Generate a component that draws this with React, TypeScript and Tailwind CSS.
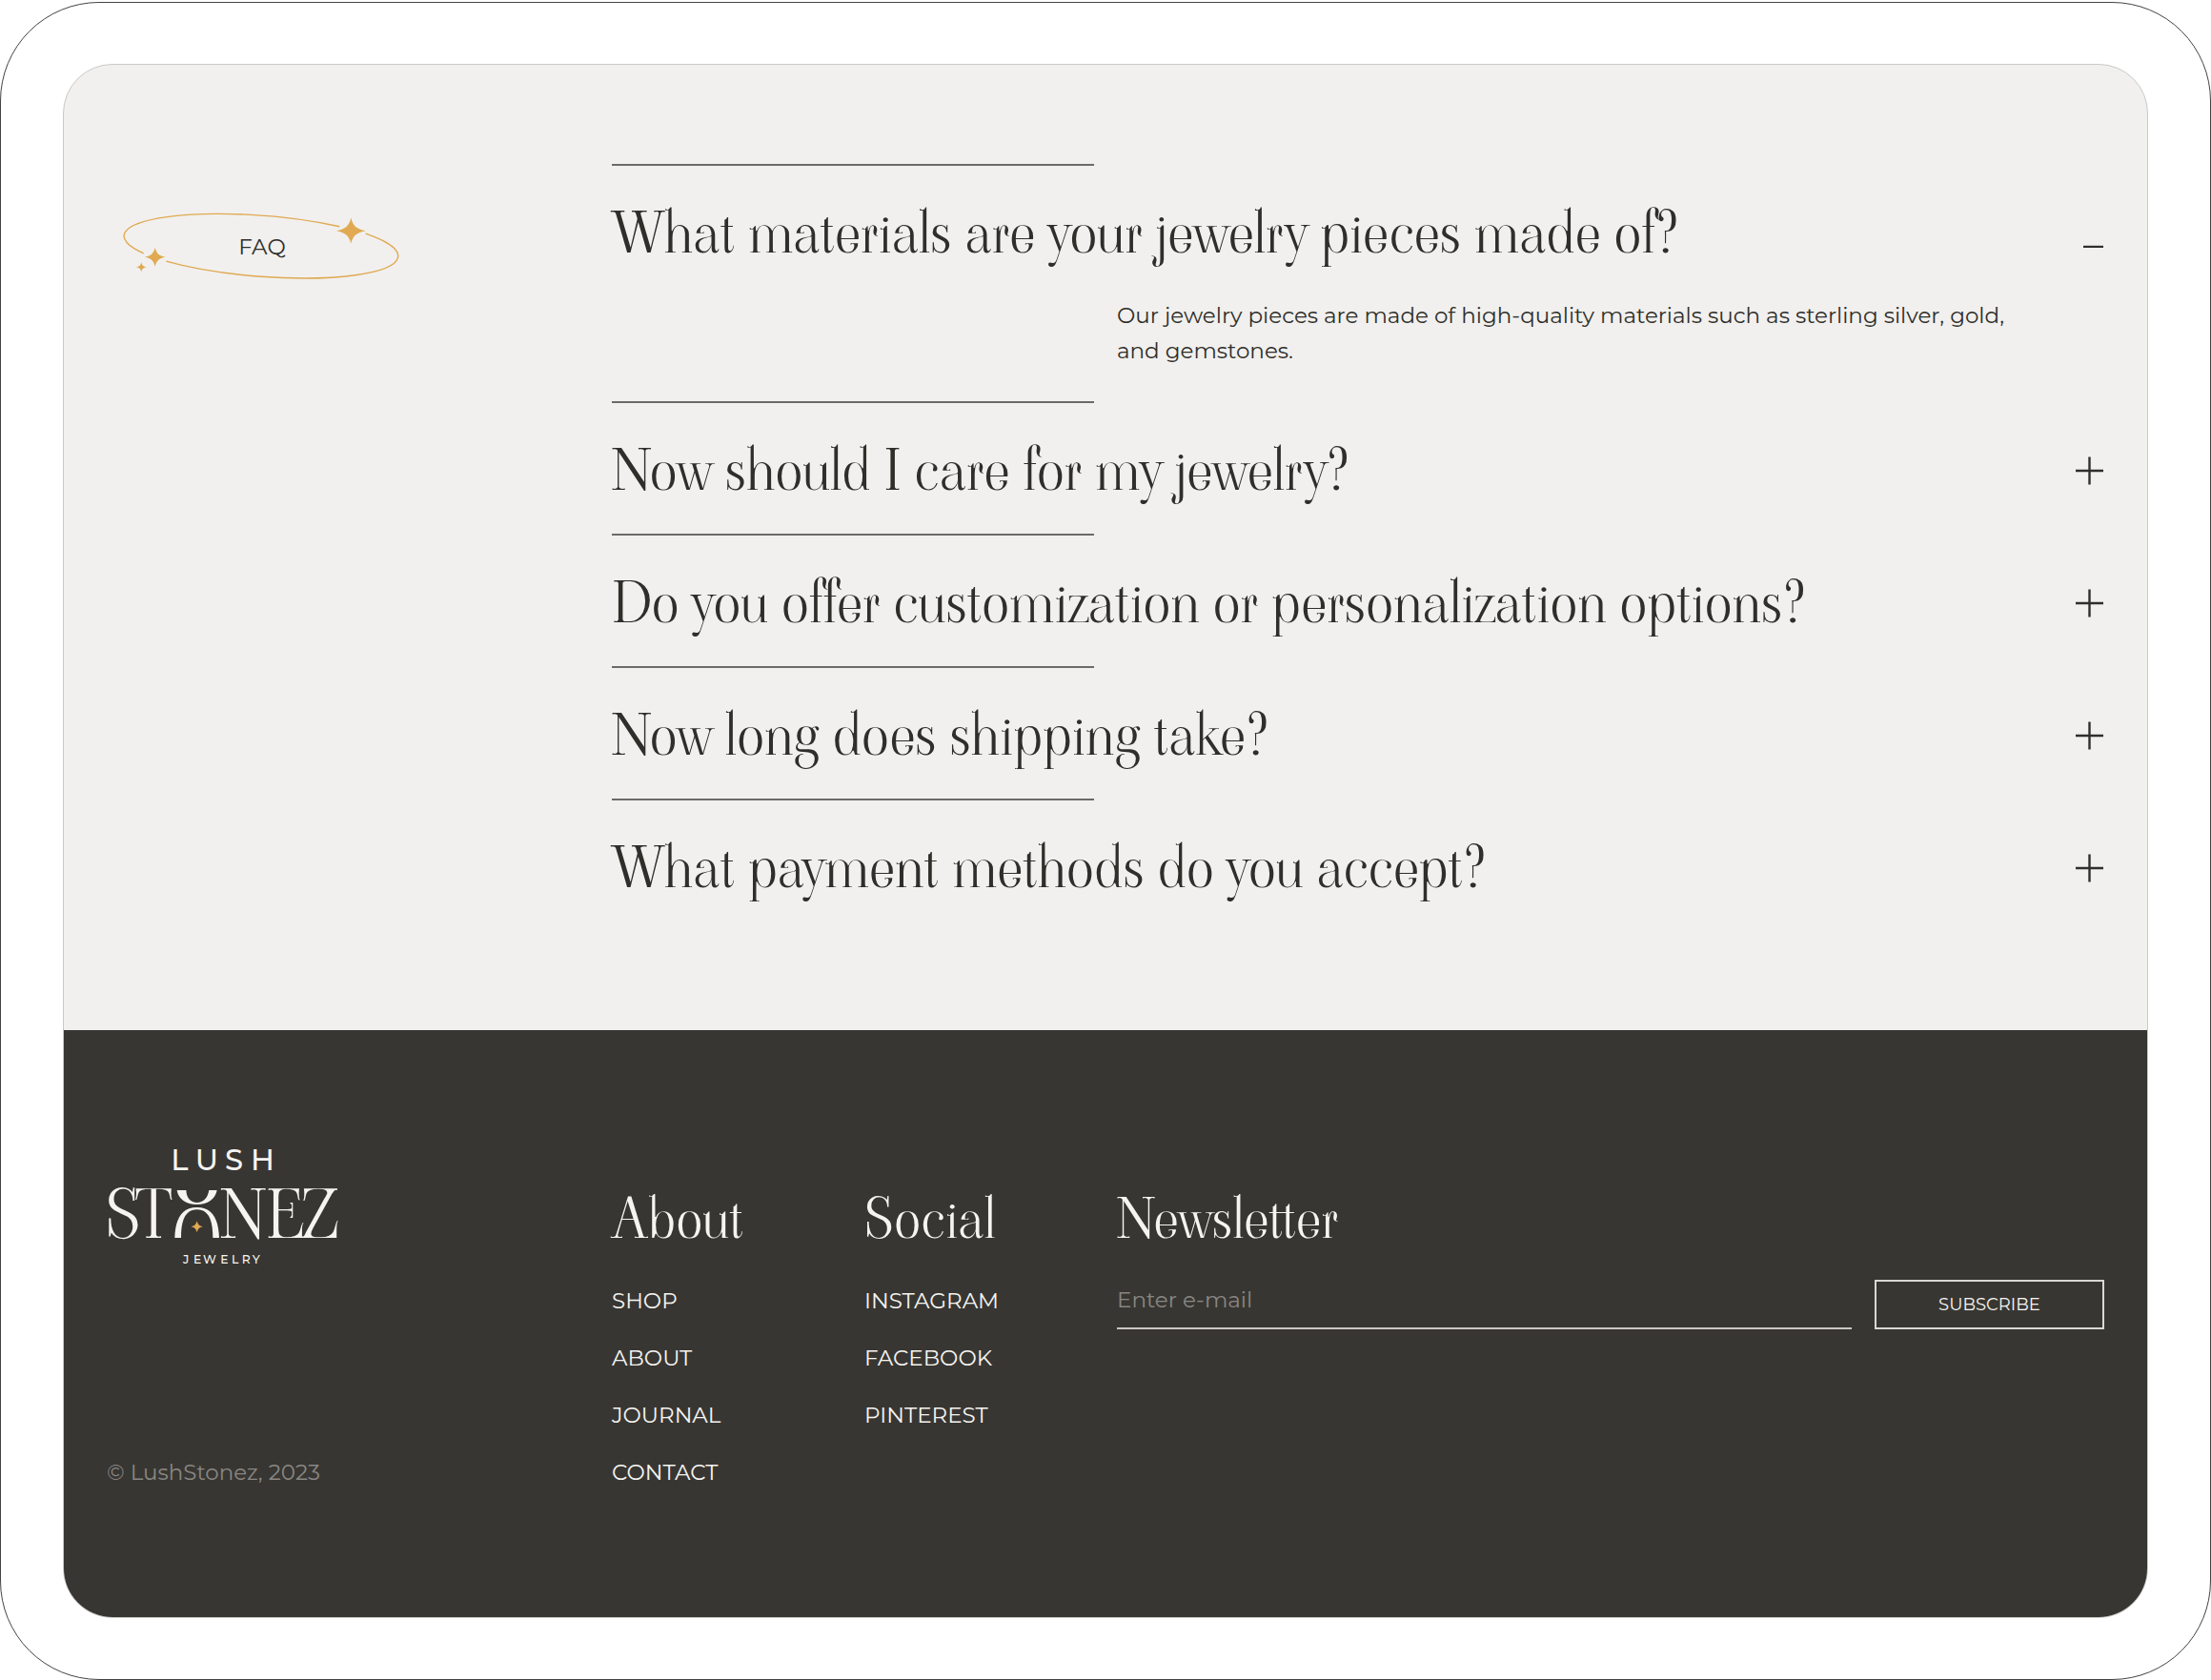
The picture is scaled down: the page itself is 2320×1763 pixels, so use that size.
import React, { useState } from "react";

type Faq = { question: string; answer: string };

const faqs: Faq[] = [
  {
    question: "What materials are your jewelry pieces made of?",
    answer:
      "Our jewelry pieces are made of high-quality materials such as sterling silver, gold, and gemstones.",
  },
  {
    question: "Now should I care for my jewelry?",
    answer: "",
  },
  {
    question: "Do you offer customization or personalization options?",
    answer: "",
  },
  {
    question: "Now long does shipping take?",
    answer: "",
  },
  {
    question: "What payment methods do you accept?",
    answer: "",
  },
];

const linkGroups = [
  { title: "About", links: ["SHOP", "ABOUT", "JOURNAL", "CONTACT"] },
  { title: "Social", links: ["INSTAGRAM", "FACEBOOK", "PINTEREST"] },
];

function FaqBadge() {
  return (
    <div className="ml-4 mt-12 grid w-[294px] place-items-center">
      <svg
        className="col-start-1 row-start-1"
        width="294"
        height="78"
        viewBox="0 0 294 78"
        fill="none"
        aria-hidden="true"
      >
        <g stroke="#e0a952" strokeWidth="1.4">
          <path d="M228.3 17.8A145.4 32.3 4.5 0 0 22.7 45.9" />
          <path d="M46.3 54.2A145.4 32.3 4.5 0 0 255.6 25.2" />
        </g>
        <g fill="#e0a952">
          <path d="M240.3 8.5C242.3 17 246 20.5 255.8 22.2C246 24 242.3 27.5 240.3 35.6C238.3 27.5 234.5 24 225 22.2C234.5 20.5 238.3 17 240.3 8.5Z" />
          <path d="M34.7 39.7C36.2 46 38.7 48.5 45.7 49.7C38.7 51 36.2 53.5 34.7 59.7C33.2 53.5 30.7 51 23.7 49.7C30.7 48.5 33.2 46 34.7 39.7Z" />
          <path d="M20.3 55.3C21 58.5 22.3 59.7 25.8 60.3C22.3 61 21 62.3 20.3 65.4C19.6 62.3 18.3 61 14.8 60.3C18.3 59.7 19.6 58.5 20.3 55.3Z" />
        </g>
      </svg>
      <h2 className="col-start-1 row-start-1 text-[23px] leading-[36px]">FAQ</h2>
    </div>
  );
}

function Logo() {
  return (
    <svg
      width="246"
      height="133"
      viewBox="66 50 738 399"
      fill="#f5f4f1"
      role="img"
      aria-label="Lush Stonez Jewelry"
    >
      <text x="268 344 438 519" y="143" fontSize="92" fontWeight="500">LUSH</text>
      <g className="font-['Viaoda_Libre','Liberation_Serif',serif]" fontSize="208">
        <text x="62 158" y="356">ST</text>
        <text x="424 567 684" y="356">NEZ</text>
      </g>
      <path d="M287 206H316C317 230 330 245 350 245C370 245 384 230 388 206H413C408 234 384 251 350 251C316 251 291 234 287 206Z" />
      <path d="M280 356C282 296 302 260 350 260C398 260 418 296 420 356H400C400 300 387 267 350 267C313 267 300 300 300 356Z" />
      <path d="M350 303C353 314 357 318 368 321C357 324 353 328 350 339C347 328 343 324 332 321C343 318 347 314 350 303Z" fill="#e0a952" />
      <text x="306 339 369 424 459 491 524" y="438" fontSize="37" fontWeight="500">JEWELRY</text>
    </svg>
  );
}

function FaqItem({
  item,
  isOpen,
  onToggle,
}: {
  item: Faq;
  isOpen: boolean;
  onToggle: () => void;
}) {
  return (
    <div className="pb-[34px]">
      <div className="grid grid-cols-3 gap-6">
        <div className="border-t-2 border-[#6b6a67]" />
      </div>
      <button
        type="button"
        aria-expanded={isOpen}
        onClick={onToggle}
        className="mt-[39px] flex w-full items-center justify-between text-left"
      >
        <span className="font-['Viaoda_Libre','Liberation_Serif',serif] text-[60px] leading-[64px] [font-variant-ligatures:none]">
          {item.question}
        </span>
        <svg width="30" height="30" viewBox="0 0 30 30" stroke="#2f2e2a" strokeWidth="2.4" aria-hidden="true">
          {isOpen ? <path d="M8 29H29" /> : <path d="M0 15H29M14.5 .5V29.5" />}
        </svg>
      </button>
      {isOpen && item.answer && (
        <div className="mt-9 grid grid-cols-9 gap-6">
          <p className="col-span-6 col-start-4 pr-20 text-[23px] leading-[37px]">{item.answer}</p>
        </div>
      )}
    </div>
  );
}

export default function App() {
  const [openIndex, setOpenIndex] = useState(0);

  return (
    <div className="bg-white pt-0.5 font-[Montserrat,Inter,sans-serif] text-[#2f2e2a]">
      <div className="rounded-[104px] border border-[#444340] px-[65px] py-16">
        <div className="overflow-hidden rounded-[52px] border border-[#c9c9c7] bg-[#f1f0ee]">
          <section className="grid grid-cols-12 gap-6 px-[45px] pb-[104px] pt-[104px]">
            <div className="col-span-3">
              <FaqBadge />
            </div>
            <div className="col-span-9">
              {faqs.map((item, i) => (
                <FaqItem
                  key={item.question}
                  item={item}
                  isOpen={openIndex === i}
                  onToggle={() => setOpenIndex(openIndex === i ? -1 : i)}
                />
              ))}
            </div>
          </section>

          <footer className="grid grid-cols-12 gap-6 bg-[#383632] px-[45px] pb-[134px] pt-[116px] text-[#f5f4f1]">
            <div className="col-span-3 flex flex-col items-start justify-between">
              <Logo />
              <p className="text-[23px] leading-[36px] text-[#888783]">© LushStonez, 2023</p>
            </div>

            <nav className="col-span-3 grid grid-cols-2 gap-6 pt-[50px]">
              {linkGroups.map((group) => (
                <div key={group.title}>
                  <h3 className="font-['Viaoda_Libre','Liberation_Serif',serif] text-[58px] leading-[64px]">{group.title}</h3>
                  <ul className="mt-9 flex flex-col gap-6">
                    {group.links.map((link) => (
                      <li key={link} className="text-[23px] leading-[36px]">
                        <a href="#">{link}</a>
                      </li>
                    ))}
                  </ul>
                </div>
              ))}
            </nav>

            <div className="col-span-6 pt-[50px]">
              <h3 className="font-['Viaoda_Libre','Liberation_Serif',serif] text-[58px] leading-[64px]">Newsletter</h3>
              <form className="mt-8 grid grid-cols-4 gap-6" onSubmit={(e) => e.preventDefault()}>
                <input
                  type="email"
                  aria-label="E-mail"
                  placeholder="Enter e-mail"
                  className="col-span-3 h-[52px] border-b-2 border-[#c9c8c4] bg-transparent pb-2 text-[23px] outline-none placeholder:text-[#888783]"
                />
                <button type="submit" className="h-[52px] border-2 border-[#d9d8d4] text-[18px]">
                  SUBSCRIBE
                </button>
              </form>
            </div>
          </footer>
        </div>
      </div>
    </div>
  );
}
